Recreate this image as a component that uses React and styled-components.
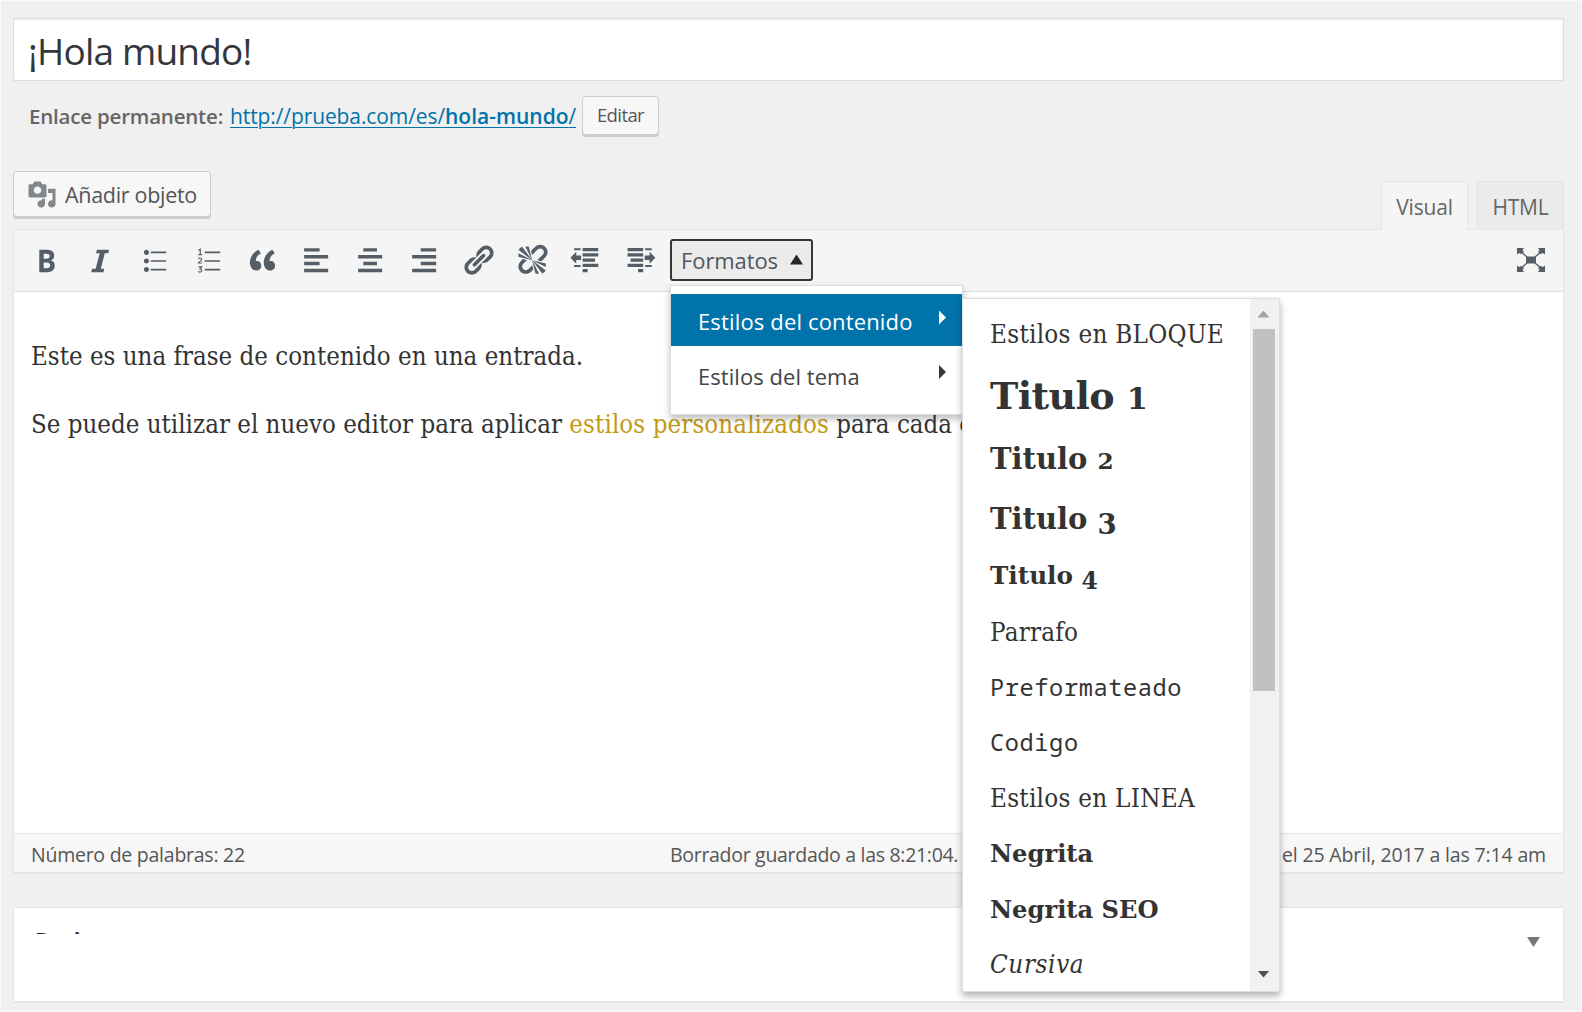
import React from "react";
import styled, { createGlobalStyle, css } from "styled-components";

const sans = `"Open Sans", "Noto Sans", sans-serif`;
const serif = `"DejaVu Serif Condensed", "DejaVu Serif", serif`;
const wideSerif = `"DejaVu Serif", serif`;
const mono = `"Noto Sans Mono", "DejaVu Sans Mono", monospace`;

const GlobalStyle = createGlobalStyle`
  *, *::before, *::after { box-sizing: border-box; }
  body { margin: 0; background: #f0f0f0; font-family: ${sans}; color: #444; }
  p { margin: 0; }
`;

const Page = styled.main`
  display: flex;
  flex-direction: column;
  width: 1582px;
  height: 1012px;
  padding: 17px 17px 0 12px;
  overflow: hidden;
  border: 1px solid #fafafa;
  background: #f0f0f0;
`;

const TitleField = styled.h1`
  margin: 0;
  height: 63px;
  padding-left: 14px;
  border: 1px solid #ddd;
  box-shadow: inset 0 1px 2px rgba(0, 0, 0, 0.07);
  background: #fff;
  color: #32373c;
  font-size: 37px;
  font-weight: 400;
  line-height: 64px;
  letter-spacing: -0.8px;
`;

const PermalinkRow = styled.div`
  display: flex;
  align-items: flex-start;
  margin-top: 15px;
  padding-left: 16px;
  height: 40px;
  font-size: 20.5px;
  line-height: 40px;
  white-space: pre;
`;

const PermalinkLabel = styled.span`
  width: 201px;
  color: #666;
  font-weight: 600;
  letter-spacing: -0.2px;
`;

const Permalink = styled.span`
  width: 352px;
  color: #0073aa;
  font-size: 21px;
  letter-spacing: -0.1px;

  u {
    text-decoration-thickness: 1px;
    text-underline-offset: 3px;
  }

  b { font-weight: 600; letter-spacing: 0; }
`;

const Button = styled.button`
  display: flex;
  align-items: center;
  justify-content: center;
  flex: none;
  gap: 8px;
  width: ${(p) => p.$width}px;
  height: ${(p) => p.$height}px;
  padding: ${(p) => p.$padding || "0"};
  border: 1px solid #ccc;
  border-radius: 4px;
  box-shadow: 0 2px 0 #ccc;
  background: #f7f7f7;
  color: #555;
  font-family: ${sans};
  font-size: ${(p) => p.$size}px;
  letter-spacing: ${(p) => p.$spacing}px;
  white-space: nowrap;
`;

const EditorHead = styled.div`
  display: flex;
  justify-content: space-between;
  margin-top: 35px;
  height: 58px;
`;

const Tabs = styled.div`
  display: flex;
  align-items: flex-end;
  gap: 9px;
`;

const Tab = styled.div`
  position: relative;
  z-index: 1;
  width: 87px;
  height: ${(p) => (p.$active ? 49 : 48)}px;
  margin-bottom: ${(p) => (p.$active ? -1 : 0)}px;
  border: 1px solid #e5e5e5;
  border-bottom: 0;
  background: ${(p) => (p.$active ? "#f5f5f5" : "#ebebeb")};
  color: #666;
  font-size: 21px;
  line-height: 50px;
  letter-spacing: -0.2px;
  text-align: center;
`;

const Editor = styled.section`
  display: flex;
  flex-direction: column;
  height: 644px;
  border: 1px solid #e5e5e5;
  box-shadow: 0 1px 1px rgba(0, 0, 0, 0.04);
  background: #fff;
`;

const Toolbar = styled.div`
  display: flex;
  align-items: center;
  height: 62px;
  padding: 0 18px 0 5px;
  border-bottom: 1px solid #ddd;
  background: #f5f5f5;
  color: #555d66;
`;

const Tool = styled.span`
  display: flex;
  justify-content: center;
  width: 54px;
  flex: none;

  svg { display: block; width: 34.3px; height: 34.3px; }
`;

const FormatsBox = styled.div`
  position: relative;
  z-index: 5;
  margin: 0 0 2px 3px;
`;

const FormatsButton = styled.button`
  display: flex;
  align-items: center;
  justify-content: space-between;
  width: 143px;
  height: 42px;
  padding: 0 8px 0 9px;
  border: 2px solid #32373c;
  border-radius: 3px;
  background: #ebebeb;
  color: #50575e;
  font-family: ${sans};
  font-size: 22px;
  letter-spacing: -0.1px;
`;

const Triangle = styled.i`
  flex: none;
  width: ${(p) => p.$w}px;
  height: ${(p) => p.$h}px;
  background: ${(p) => p.$color};
  clip-path: polygon(
    ${(p) =>
      ({
        up: "50% 0, 100% 100%, 0 100%",
        down: "0 0, 100% 0, 50% 100%",
        right: "0 0, 100% 50%, 0 100%",
      })[p.$dir]}
  );
`;

const Menu = styled.div`
  position: absolute;
  left: 0;
  top: 46px;
  width: 293px;
  height: 130px;
  padding-top: 8px;
  border: 1px solid #ddd;
  box-shadow: 0 4px 7px rgba(0, 0, 0, 0.25);
  background: #fff;
`;

const MenuItem = styled.div`
  display: flex;
  align-items: center;
  justify-content: space-between;
  height: ${(p) => (p.$active ? 52 : 60)}px;
  padding: ${(p) => (p.$active ? "2px" : "0")} 16px 0 27px;
  background: ${(p) => (p.$active ? "#0073aa" : "transparent")};
  color: ${(p) => (p.$active ? "#fff" : "#444")};
  font-size: 22px;
  letter-spacing: ${(p) => (p.$active ? 0.15 : 0.05)}px;
  white-space: nowrap;

  i { margin-bottom: ${(p) => (p.$active ? 6 : 7)}px; }
`;

const SubMenu = styled.div`
  position: absolute;
  left: 291px;
  top: 12px;
  display: flex;
  width: 318px;
  height: 694px;
  overflow: hidden;
  border: 1px solid #ddd;
  background: #fff;
  box-shadow: 0 4px 7px rgba(0, 0, 0, 0.3);
`;

const StyleList = styled.div`
  flex: 1;
  padding: 6px 0 0 27px;
  color: #333;
`;

const StyleItem = styled.div`
  height: ${(p) => p.$height}px;
  line-height: ${(p) => p.$height}px;
  font-family: ${(p) => p.$font || serif};
  font-size: ${(p) => p.$size || 25.8}px;
  font-weight: ${(p) => (p.$bold ? 700 : 400)};
  font-style: ${(p) => (p.$italic ? "italic" : "normal")};
  letter-spacing: ${(p) => p.$spacing || 0}px;
  white-space: nowrap;
`;

const Numeral = styled.span`
  line-height: 1;
  ${(p) =>
    p.$low
      ? css`
          font-size: 0.95em;
          vertical-align: -5px;
        `
      : css`
          font-size: 0.8em;
        `}
`;

const ScrollTrack = styled.div`
  display: flex;
  flex-direction: column;
  align-items: center;
  width: 29px;
  padding: 12px 2px 13px 0;
  background: #f1f1f1;
`;

const ScrollThumb = styled.div`
  width: 22px;
  height: 362px;
  margin: 11px 0 auto;
  background: #c1c1c1;
`;

const Content = styled.article`
  display: flex;
  flex-direction: column;
  flex: 1;
  gap: 28px;
  padding: 44px 17px 0;
  color: #333;
  font-family: ${serif};
  font-size: 25.6px;
  line-height: 40px;
  letter-spacing: 0.02px;
  white-space: nowrap;
`;

const Accent = styled.span`
  color: #c39a14;
  letter-spacing: 0.12px;
`;

const StatusBar = styled.footer`
  display: flex;
  height: 39px;
  padding: 0 17px;
  border-top: 1px solid #e5e5e5;
  background: #f7f7f7;
  color: #555;
  font-size: 19.5px;
  line-height: 41px;
  white-space: nowrap;
`;

const WordCount = styled.span`
  width: 639px;
  letter-spacing: -0.25px;
`;

const SavedAt = styled.span`
  flex: 1;
  letter-spacing: -0.3px;
`;

const EditedAt = styled.span`
  letter-spacing: -0.15px;
`;

const MetaBox = styled.section`
  display: flex;
  justify-content: space-between;
  margin-top: 34px;
  height: 95px;
  padding: 22px 23px 0 21px;
  border: 1px solid #e5e5e5;
  box-shadow: 0 1px 1px rgba(0, 0, 0, 0.04);
  background: #fff;

  i { margin-top: 7px; }
`;

const MetaTitle = styled.div`
  height: 4px;
  overflow: hidden;
  color: #23282d;
  font-size: 22px;
  font-weight: 700;
  line-height: 18px;
  letter-spacing: -0.4px;
`;

const Glyph = ({ d }) => (
  <svg viewBox="0 0 20 20" fill="currentColor">
    <path d={d} />
  </svg>
);

const paths = {
  bold: "M6 4v13h4.54c1.37 0 2.46-.33 3.26-1 .8-.66 1.2-1.58 1.2-2.77 0-.84-.17-1.51-.51-2.01s-.9-.85-1.67-1.03v-.09c.57-.1 1.02-.4 1.36-.9s.51-1.13.51-1.91c0-1.14-.39-1.98-1.17-2.5C12.75 4.26 11.5 4 9.78 4H6zm2.57 5.15V6.26h1.36c.73 0 1.27.11 1.61.32.34.22.51.58.51 1.07 0 .54-.16.92-.47 1.15s-.82.35-1.51.35h-1.5zm0 2.19h1.6c1.44 0 2.16.53 2.16 1.61 0 .6-.17 1.05-.51 1.34s-.86.43-1.57.43H8.57v-3.38z",
  italic: "M15.2 4l-.5 2h-2l-2.3 9h2l-.5 2H4.8l.5-2h2.1l2.3-9H7.6l.5-2z",
  bullets: "M5.5 7C4.67 7 4 6.33 4 5.5 4 4.68 4.67 4 5.5 4 6.32 4 7 4.68 7 5.5 7 6.33 6.32 7 5.5 7zM8 5h9v1H8V5zm-2.5 7c-.83 0-1.5-.67-1.5-1.5C4 9.68 4.67 9 5.5 9c.82 0 1.5.68 1.5 1.5 0 .83-.68 1.5-1.5 1.5zM8 10h9v1H8v-1zm-2.5 7c-.83 0-1.5-.67-1.5-1.5 0-.82.67-1.5 1.5-1.5.82 0 1.5.68 1.5 1.5 0 .83-.68 1.5-1.5 1.5zM8 15h9v1H8v-1z",
  quote: "M9.49 13.22c0-.74-.2-1.38-.61-1.9-.62-.78-1.83-.88-2.53-.72-.29-1.65 1.11-3.75 2.92-4.65L7.88 4c-2.73 1.3-5.42 4.28-4.96 8.05C3.21 14.43 4.59 16 6.54 16c.85 0 1.56-.25 2.12-.75s.83-1.18.83-2.03zm8.05 0c0-.74-.2-1.38-.61-1.9-.63-.78-1.83-.88-2.53-.72-.29-1.65 1.11-3.75 2.92-4.65L15.93 4c-2.73 1.3-5.41 4.28-4.95 8.05.29 2.38 1.66 3.95 3.61 3.95.85 0 1.56-.25 2.12-.75s.83-1.18.83-2.03z",
  left: "M12 5V3H3v2h9zm5 4V7H3v2h14zm-5 4v-2H3v2h9zm5 4v-2H3v2h14z",
  center: "M14 5V3H6v2h8zm3 4V7H3v2h14zm-3 4v-2H6v2h8zm3 4v-2H3v2h14z",
  right: "M17 5V3H8v2h9zm0 4V7H3v2h14zm0 4v-2H8v2h9zm0 4v-2H3v2h14z",
  link: "M17.74 2.76c1.68 1.69 1.68 4.41 0 6.1l-1.53 1.52c-1.12 1.12-2.7 1.47-4.14 1.09l2.62-2.61.76-.77.76-.76c.84-.84.84-2.2 0-3.04-.84-.85-2.2-.85-3.04 0l-.77.76-3.38 3.38c-.37-1.44-.02-3.02 1.1-4.14l1.52-1.53c1.69-1.68 4.42-1.68 6.1 0zM8.59 13.43l5.34-5.34c.42-.42.42-1.1 0-1.52-.44-.43-1.13-.39-1.53 0l-5.33 5.34c-.42.42-.42 1.1 0 1.52.44.43 1.13.39 1.52 0zm-.76 2.29l4.14-4.15c.38 1.44.03 3.02-1.09 4.14l-1.52 1.53c-1.69 1.68-4.41 1.68-6.1 0-1.68-1.68-1.68-4.42 0-6.1l1.53-1.52c1.12-1.12 2.7-1.47 4.14-1.1l-4.14 4.15c-.85.84-.85 2.2 0 3.05.84.84 2.2.84 3.04 0z",
  unlink: "M17.74 2.26c1.68 1.69 1.68 4.41 0 6.1l-1.53 1.52c-.32.33-.69.58-1.08.77L13 10l1.69-1.64.76-.77.76-.76c.84-.84.84-2.2 0-3.04-.84-.85-2.2-.85-3.04 0l-.77.76-.76.76L10 7l-.65-2.14c.19-.38.44-.75.77-1.07l1.52-1.53c1.69-1.68 4.42-1.68 6.1 0zM2 4l8 6-6-8zm4-2l4 8-2-8H6zM2 6l8 4-8-2V6zm7.36 7.69L10 13l.74 2.35-1.38 1.39c-1.69 1.68-4.41 1.68-6.1 0-1.68-1.68-1.68-4.42 0-6.1l1.39-1.38L7 10l-.69.64-1.52 1.53c-.85.84-.85 2.2 0 3.04.84.85 2.2.85 3.04 0zM18 16l-8-6 6 8zm-4 2l-4-8 2 8h2zm4-4l-8-4 8 2v2z",
};

const NumberedIcon = () => (
  <svg viewBox="0 0 20 20" fill="none" stroke="currentColor" strokeWidth=".65">
    <path d="M8 5.5h9M8 10.5h9M8 15.5h9" strokeWidth="1" />
    <path d="M4.4 4.3l1-.7v3.1M4.3 6.8h2.2M4.3 9.3c.3-.8 1.9-.8 1.9.2 0 .8-1.3 1.3-1.9 2.2h2.3M4.3 13.9h2l-1.1 1.3c1.6 0 1.4 1.8.1 1.8-.5 0-.8-.1-1.1-.4" />
  </svg>
);

const OutdentIcon = () => (
  <svg viewBox="0 0 34 34" fill="currentColor">
    <path d="M13.5 5H29v3.1H13.5zM13.5 10.2H29v3.1H13.5zM13.5 15.4h12.3v3.1H13.5zM13.5 20.6H29v3.1H13.5zM13.5 25.8h5v3.1h-5zM5 5.2h6.5v1.9H5zM5 21.8h6.5v1.9H5zM1.4 14.6l5.8-6v3.8h4.8v4.4H7.2v3.8z" />
  </svg>
);

const IndentIcon = () => (
  <svg viewBox="0 0 34 34" fill="currentColor">
    <path d="M4.5 5H20v3.1H4.5zM4.5 10.2H20v3.1H4.5zM7.5 15.4H20v3.1H7.5zM4.5 20.6H20v3.1H4.5zM15 25.8h5v3.1h-5zM22 5.2h6.5v1.9H22zM22 21.8h6.5v1.9H22zM32.1 14.6l-5.8-6v3.8h-4.8v4.4h4.8v3.8z" />
  </svg>
);

const ExpandSvg = styled.svg`
  display: block;
  margin: 0 0 2px auto;
  width: 28px;
  height: 24px;
`;

const ExpandIcon = () => (
  <ExpandSvg viewBox="0 0 28 24" fill="currentColor">
    <path d="M9 8.5h10v7H9z" />
    <path d="M0 0h7L5.5 2 7 4 4 6 2 5 0 6.5zM28 0h-7l1.5 2L21 4l3 2 2-1 2 1.5zM0 24h7l-1.5-2L7 20l-3-2-2 1-2-1.500zM28 24h-7l1.500-2L21 20l3-2 2 1 2-1.500z" />
    <path d="M3 3l7 6M25 3l-7 6M3 21l7-6M25 21l-7-6" fill="none" stroke="currentColor" strokeWidth="1.3" />
  </ExpandSvg>
);

const MediaSvg = styled.svg`
  flex: none;
  width: 30px;
  height: 29px;
  color: #82878c;
`;

const MediaIcon = () => (
  <MediaSvg viewBox="0 0 20 20" preserveAspectRatio="none" fill="currentColor">
    <path d="M13 11V4c0-.55-.45-1-1-1h-1.67L9 1H5L3.67 3H2c-.55 0-1 .45-1 1v7c0 .55.45 1 1 1h10c.55 0 1-.45 1-1zM7 4.5c1.38 0 2.5 1.12 2.5 2.5S8.38 9.5 7 9.5 4.5 8.38 4.5 7 5.62 4.5 7 4.5zM14 6h5v10.5c0 1.38-1.12 2.5-2.5 2.5S14 17.88 14 16.5s1.12-2.5 2.5-2.5c.17 0 .34.02.5.05V9h-3V6zm-4 8.05V13h2v3.5c0 1.38-1.12 2.5-2.5 2.5S7 17.88 7 16.5 8.12 14 9.5 14c.17 0 .34.02.5.05z" />
  </MediaSvg>
);

export default function App() {
  return (
    <Page>
      <GlobalStyle />
      <TitleField>¡Hola mundo!</TitleField>
      <PermalinkRow>
        <PermalinkLabel>Enlace permanente:</PermalinkLabel>
        <Permalink>
          <u>http://prueba.com/es/<b>hola-mundo</b>/</u>
        </Permalink>
        <Button $width={77} $height={39} $size={18.5} $spacing={-0.6} $padding="0 0 2px">
          Editar
        </Button>
      </PermalinkRow>

      <EditorHead>
        <Button $width={198} $height={46} $size={21.5} $spacing={-0.3} $padding="1px 0 0">
          <MediaIcon />
          Añadir objeto
        </Button>
        <Tabs>
          <Tab $active>Visual</Tab>
          <Tab>HTML</Tab>
        </Tabs>
      </EditorHead>

      <Editor>
        <Toolbar>
          <Tool><Glyph d={paths.bold} /></Tool>
          <Tool><Glyph d={paths.italic} /></Tool>
          <Tool><Glyph d={paths.bullets} /></Tool>
          <Tool><NumberedIcon /></Tool>
          <Tool><Glyph d={paths.quote} /></Tool>
          <Tool><Glyph d={paths.left} /></Tool>
          <Tool><Glyph d={paths.center} /></Tool>
          <Tool><Glyph d={paths.right} /></Tool>
          <Tool><Glyph d={paths.link} /></Tool>
          <Tool><Glyph d={paths.unlink} /></Tool>
          <Tool><OutdentIcon /></Tool>
          <Tool><IndentIcon /></Tool>
          <FormatsBox>
            <FormatsButton>
              Formatos
              <Triangle $dir="up" $w={13} $h={10} $color="#23282d" />
            </FormatsButton>
            <Menu>
              <MenuItem $active>
                Estilos del contenido
                <Triangle $dir="right" $w={7} $h={14} $color="#fff" />
              </MenuItem>
              <MenuItem>
                Estilos del tema
                <Triangle $dir="right" $w={7} $h={14} $color="#32373c" />
              </MenuItem>
              <SubMenu>
                <StyleList>
                  <StyleItem $height={58} $spacing={0.27}>Estilos en BLOQUE</StyleItem>
                  <StyleItem $height={66} $font={wideSerif} $size={38} $spacing={-0.6} $bold>
                    Titulo <Numeral>1</Numeral>
                  </StyleItem>
                  <StyleItem $height={61} $font={wideSerif} $size={29} $bold>
                    Titulo <Numeral>2</Numeral>
                  </StyleItem>
                  <StyleItem $height={58} $font={wideSerif} $size={29} $bold>
                    Titulo <Numeral $low>3</Numeral>
                  </StyleItem>
                  <StyleItem $height={56} $font={wideSerif} $size={24.7} $bold>
                    Titulo <Numeral $low>4</Numeral>
                  </StyleItem>
                  <StyleItem $height={56} $spacing={0.2}>Parrafo</StyleItem>
                  <StyleItem $height={55} $font={mono} $size={23.6} $spacing={0.62}>Preformateado</StyleItem>
                  <StyleItem $height={55} $font={mono} $size={23.6} $spacing={0.62}>Codigo</StyleItem>
                  <StyleItem $height={56} $spacing={0.25}>Estilos en LINEA</StyleItem>
                  <StyleItem $height={56} $font={wideSerif} $size={24.2} $bold>Negrita</StyleItem>
                  <StyleItem $height={55} $font={wideSerif} $size={24.2} $bold>Negrita SEO</StyleItem>
                  <StyleItem $height={55} $spacing={0.6} $italic>Cursiva</StyleItem>
                </StyleList>
                <ScrollTrack>
                  <Triangle $dir="up" $w={12} $h={7} $color="#a3a3a3" />
                  <ScrollThumb />
                  <Triangle $dir="down" $w={12} $h={7} $color="#505050" />
                </ScrollTrack>
              </SubMenu>
            </Menu>
          </FormatsBox>
          <ExpandIcon />
        </Toolbar>
        <Content>
          <p>Este es una frase de contenido en una entrada.</p>
          <p>
            Se puede utilizar el nuevo editor para aplicar <Accent>estilos personalizados</Accent> para cada c
          </p>
        </Content>
        <StatusBar>
          <WordCount>Número de palabras: 22</WordCount>
          <SavedAt>Borrador guardado a las 8:21:04.</SavedAt>
          <EditedAt>el 25 Abril, 2017 a las 7:14 am</EditedAt>
        </StatusBar>
      </Editor>

      <MetaBox>
        <MetaTitle>Revi</MetaTitle>
        <Triangle $dir="down" $w={13} $h={10} $color="#72777c" />
      </MetaBox>
    </Page>
  );
}
